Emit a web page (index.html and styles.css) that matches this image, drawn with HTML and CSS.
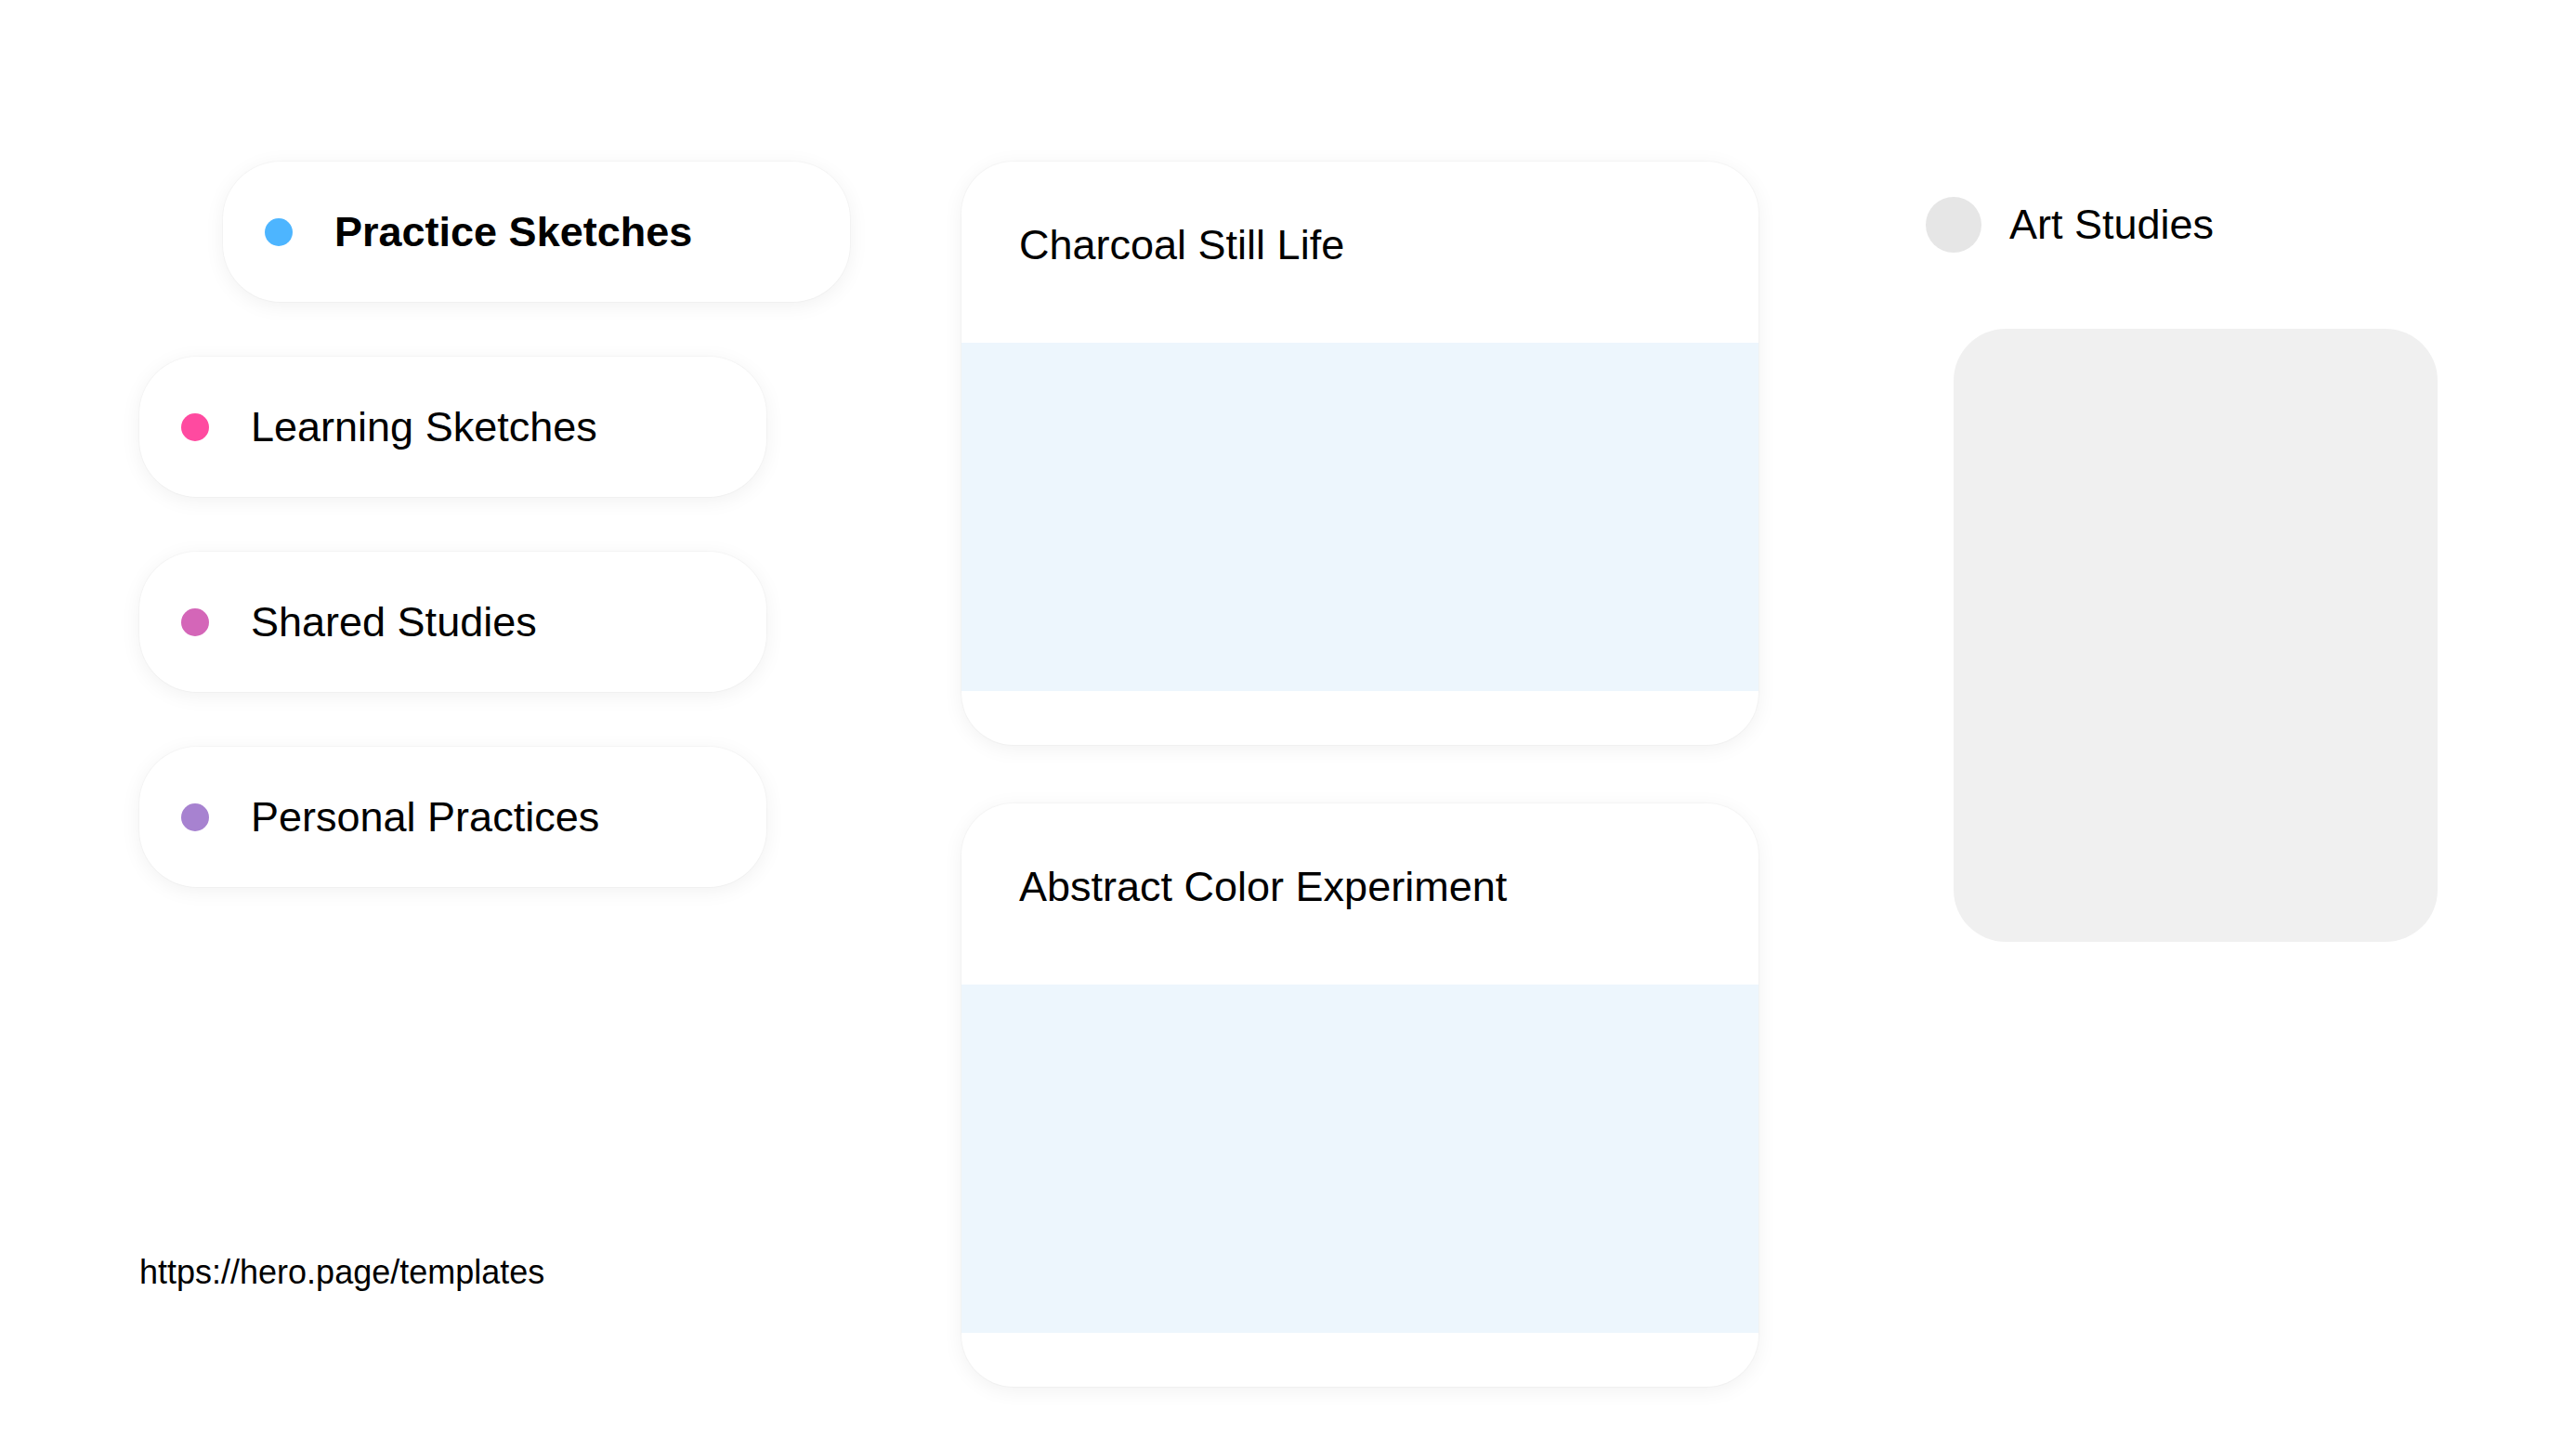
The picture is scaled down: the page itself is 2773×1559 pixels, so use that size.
FILE: index.html
```html
<!DOCTYPE html>
<html lang="en">
<head>
<meta charset="utf-8">
<title>Sketches</title>
<link rel="stylesheet" href="styles.css">
</head>
<body>
<div class="page">
  <div class="col-left">
    <nav class="pills">
      <div class="pill pill-active"><span class="dot dot-blue"></span><span class="pill-label">Practice Sketches</span></div>
      <div class="pill"><span class="dot dot-pink"></span><span class="pill-label">Learning Sketches</span></div>
      <div class="pill"><span class="dot dot-magenta"></span><span class="pill-label">Shared Studies</span></div>
      <div class="pill"><span class="dot dot-purple"></span><span class="pill-label">Personal Practices</span></div>
    </nav>
    <div class="url">https://hero.page/templates</div>
  </div>
  <div class="col-mid">
    <div class="card">
      <div class="card-head">Charcoal Still Life</div>
      <div class="card-body"></div>
      <div class="card-foot"></div>
    </div>
    <div class="card">
      <div class="card-head">Abstract Color Experiment</div>
      <div class="card-body"></div>
      <div class="card-foot"></div>
    </div>
  </div>
  <div class="col-right">
    <div class="side-head"><span class="avatar"></span><span class="side-title">Art Studies</span></div>
    <div class="side-box"></div>
  </div>
</div>
</body>
</html>
```

FILE: styles.css
```css
html, body {
  margin: 0;
  padding: 0;
  background: #ffffff;
}
body {
  font-family: "Liberation Sans", Arial, sans-serif;
  color: #000000;
}
.page {
  display: grid;
  grid-template-columns: 885px 858px 1fr;
  padding: 174px 0 0 150px;
  box-sizing: border-box;
  width: 2773px;
  height: 1559px;
}
.col-left {
  display: flex;
  flex-direction: column;
}
.pills {
  display: flex;
  flex-direction: column;
  gap: 59px;
}
.pill {
  width: 675px;
  height: 151px;
  box-sizing: border-box;
  border-radius: 62px;
  background: #ffffff;
  box-shadow: 0 4px 22px rgba(0, 0, 0, 0.06), 0 0 0 1px rgba(0, 0, 0, 0.025);
  display: flex;
  align-items: center;
  padding-left: 45px;
  gap: 45px;
}
.pill-active {
  margin-left: 90px;
}
.pill-active .pill-label {
  font-weight: 700;
}
.pill-label {
  font-size: 45px;
}
.dot {
  width: 30px;
  height: 30px;
  border-radius: 50%;
  flex: none;
}
.dot-blue { background: #4db5ff; }
.dot-pink { background: #ff4aa0; }
.dot-magenta { background: #d466b8; }
.dot-purple { background: #a782d0; }
.url {
  margin-top: 394px;
  font-size: 36px;
}
.col-mid {
  display: flex;
  flex-direction: column;
  gap: 63px;
}
.card {
  width: 858px;
  height: 628px;
  border-radius: 56px;
  background: #ffffff;
  box-shadow: 0 4px 22px rgba(0, 0, 0, 0.06), 0 0 0 1px rgba(0, 0, 0, 0.025);
  overflow: hidden;
  display: flex;
  flex-direction: column;
}
.card-head {
  height: 195px;
  box-sizing: border-box;
  padding: 64px 62px 0;
  font-size: 45px;
}
.card-body {
  height: 375px;
  background: #edf6fd;
}
.card-foot {
  flex: 1;
}
.col-right {
  padding: 38px 0 0 180px;
  display: flex;
  flex-direction: column;
}
.side-head {
  display: flex;
  align-items: center;
  gap: 30px;
  height: 60px;
}
.avatar {
  width: 60px;
  height: 60px;
  border-radius: 50%;
  background: #e6e6e6;
  flex: none;
}
.side-title {
  font-size: 45px;
}
.side-box {
  margin: 82px 0 0 30px;
  width: 521px;
  height: 660px;
  border-radius: 56px;
  background: #f0f0f0;
}
```
